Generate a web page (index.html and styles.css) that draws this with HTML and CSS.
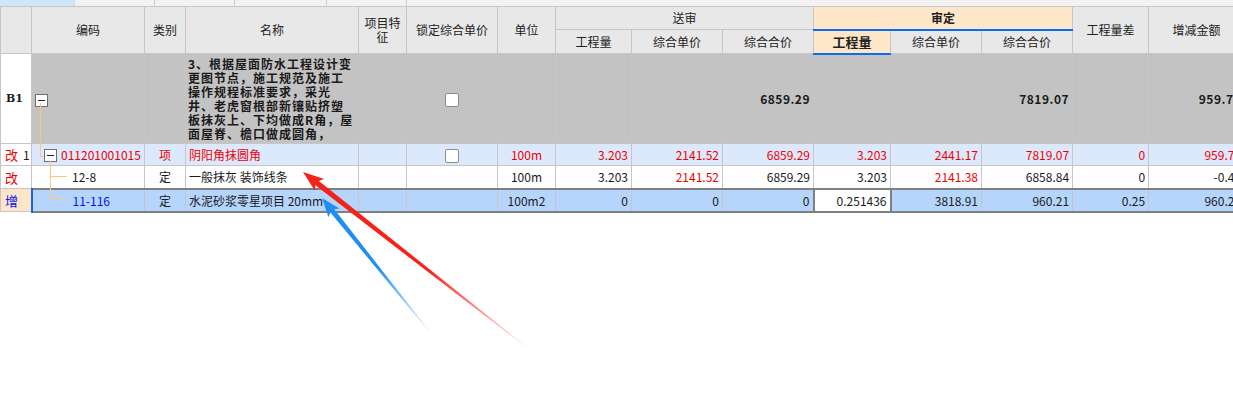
FILE: index.html
```html
<!DOCTYPE html>
<html>
<head>
<meta charset="utf-8">
<link rel="stylesheet" href="styles.css">
</head>
<body>
<div class="page">
  <div class="tabs">
    <div class="tab active"></div>
    <div class="tab w80"></div>
    <div class="tab w80"></div>
    <div class="tab w92"></div>
    <div class="tab w80"></div>
    <div class="tab rest"></div>
  </div>

  <table class="grid">
    <colgroup>
      <col style="width:31px"><col style="width:113px"><col style="width:41px"><col style="width:173px">
      <col style="width:48px"><col style="width:91px"><col style="width:58px"><col style="width:76px">
      <col style="width:91px"><col style="width:91px"><col style="width:77px"><col style="width:91px">
      <col style="width:91px"><col style="width:76px"><col style="width:96px">
    </colgroup>
    <thead>
      <tr class="h1">
        <th rowspan="2"></th>
        <th rowspan="2">编码</th>
        <th rowspan="2">类别</th>
        <th rowspan="2">名称</th>
        <th rowspan="2" class="two">项目特<br>征</th>
        <th rowspan="2">锁定综合单价</th>
        <th rowspan="2">单位</th>
        <th colspan="3">送审</th>
        <th colspan="3" class="audit">审定</th>
        <th rowspan="2">工程量差</th>
        <th rowspan="2">增减金额</th>
      </tr>
      <tr class="h2">
        <th>工程量</th>
        <th>综合单价</th>
        <th>综合合价</th>
        <th class="audit cur">工程量</th>
        <th>综合单价</th>
        <th>综合合价</th>
      </tr>
    </thead>
    <tbody>
      <tr class="part">
        <td class="mark bold">B1</td>
        <td class="code"><span class="fold fold-b1"></span></td>
        <td></td>
        <td class="desc">3、根据屋面防水工程设计变<br>更图节点，施工规范及施工<br>操作规程标准要求，采光<br>井、老虎窗根部新镶贴挤塑<br>板抹灰上、下均做成R角，屋<br>面屋脊、檐口做成圆角，</td>
        <td></td>
        <td class="mid"><span class="check"></span></td>
        <td></td>
        <td></td>
        <td></td>
        <td class="num">6859.29</td>
        <td></td>
        <td></td>
        <td class="num">7819.07</td>
        <td></td>
        <td class="num">959.78</td>
      </tr>
      <tr class="item red">
        <td class="mark"><span class="tag">改</span><span class="idx">1</span></td>
        <td class="code"><span class="fold fold-item"></span>011201001015</td>
        <td class="mid">项</td>
        <td>阴阳角抹圆角</td>
        <td></td>
        <td class="mid"><span class="check"></span></td>
        <td class="mid">100m</td>
        <td class="num">3.203</td>
        <td class="num">2141.52</td>
        <td class="num">6859.29</td>
        <td class="num">3.203</td>
        <td class="num">2441.17</td>
        <td class="num">7819.07</td>
        <td class="num">0</td>
        <td class="num">959.78</td>
      </tr>
      <tr class="sub">
        <td class="mark"><span class="tag">改</span></td>
        <td class="code leaf">12-8</td>
        <td class="mid">定</td>
        <td>一般抹灰 装饰线条</td>
        <td></td>
        <td></td>
        <td class="mid">100m</td>
        <td class="num">3.203</td>
        <td class="num hot">2141.52</td>
        <td class="num">6859.29</td>
        <td class="num">3.203</td>
        <td class="num hot">2141.38</td>
        <td class="num">6858.84</td>
        <td class="num">0</td>
        <td class="num">-0.45</td>
      </tr>
      <tr class="sub picked">
        <td class="mark added">增</td>
        <td class="code leaf blue">11-116</td>
        <td class="mid">定</td>
        <td>水泥砂浆零星项目 20mm</td>
        <td></td>
        <td></td>
        <td class="mid">100m2</td>
        <td class="num">0</td>
        <td class="num">0</td>
        <td class="num">0</td>
        <td class="num edit">0.251436</td>
        <td class="num">3818.91</td>
        <td class="num">960.21</td>
        <td class="num">0.25</td>
        <td class="num">960.21</td>
      </tr>
    </tbody>
  </table>

  <svg class="overlay" width="1233" height="407" viewBox="0 0 1233 407">
    <defs>
      <linearGradient id="fadeRed" gradientUnits="userSpaceOnUse" x1="0" y1="0" x2="288" y2="0">
        <stop offset="0" stop-color="#f5221a"/>
        <stop offset="0.55" stop-color="#f5221a"/>
        <stop offset="1" stop-color="#f5221a" stop-opacity="0"/>
      </linearGradient>
      <linearGradient id="fadeBlue" gradientUnits="userSpaceOnUse" x1="0" y1="0" x2="176" y2="0">
        <stop offset="0" stop-color="#1e8ff0"/>
        <stop offset="0.5" stop-color="#1e8ff0"/>
        <stop offset="1" stop-color="#1e8ff0" stop-opacity="0"/>
      </linearGradient>
    </defs>
    <g class="tree">
      <path d="M40.5 103 V156.5 H44"/>
      <path d="M50.5 161 V199.5 H67 M50.5 176.5 H67"/>
    </g>
    <polygon transform="translate(303 172) rotate(38.1)" fill="url(#fadeRed)"
      points="0,0 21,-7.5 18,-2.8 288,-0.4 288,0.4 18,2.8 21,7.5"/>
    <polygon transform="translate(322 198) rotate(51.2)" fill="url(#fadeBlue)"
      points="0,0 19,-7 16.5,-2.5 176,-0.4 176,0.4 16.5,2.5 19,7"/>
  </svg>
</div>
</body>
</html>
```

FILE: styles.css
```css
* {
  margin: 0px;
  padding: 0px;
  box-sizing: border-box;
}
body {
  background: #ffffff;
  font-family: "Noto Sans CJK SC", "DejaVu Sans", sans-serif;
  font-size: 12px;
  color: #1a1a1a;
}
.page {
  width: 1233px;
  height: 407px;
  position: relative;
  overflow: hidden;
}
.tabs {
  display: flex;
  height: 6px;
  background: #f2f2f2;
}
.tab {
  width: 80px;
  border-right: 1px solid #cfcfcf;
}
.tab.active {
  width: 75px;
  background: #cde6fa;
  border-right: 1px solid #c4dcef;
}
.tab.w92 {
  width: 92px;
}
.tab.rest {
  flex: 1;
  border-right: none;
}

.grid {
  width: 1244px;
  table-layout: fixed;
  border-collapse: collapse;
}
.grid th,
.grid td {
  border: 1px solid #c6c6c6;
  overflow: hidden;
  white-space: nowrap;
}
.grid th {
  background: #e8e8e8;
  font-weight: normal;
  color: #222;
  text-align: center;
  line-height: 14px;
}
.h1 th {
  height: 23px;
}
.h2 th {
  height: 24px;
}
.grid th.two {
  white-space: normal;
}
.grid th.audit {
  background: #fee7c9;
  font-weight: bold;
  border-bottom: 2px solid #0a6cf0;
}
.grid th.cur {
  font-size: 13px;
}

.grid td {
  padding: 0 3px;
  height: 23px;
  text-align: left;
}
.grid td.num {
  text-align: right;
}
.grid td.mid {
  text-align: center;
}
.mark {
  background: #ffffff;
  padding-left: 4px !important;
}
.tag {
  color: #f00000;
  font-size: 13px;
}
.idx {
  margin-left: 5px;
}

.part td {
  background: #c3c3c3;
  height: 90px;
  font-weight: bold;
}
.part td.mark {
  background: #ffffff;
  text-align: center;
  padding-left: 0 !important;
  font-family: "DejaVu Serif", serif;
  font-size: 11px;
}
.part td.desc {
  white-space: nowrap;
  letter-spacing: 1px;
  line-height: 14px;
  padding: 1px 2px;
}
.part td.num {
  font-size: 12px;
  letter-spacing: 0.5px;
}

.item td {
  background: #dce9fc;
  height: 22px;
  color: #f00000;
}
.item td.mark {
  background: #ffffff;
  color: #1a1a1a;
}
.sub td {
  background: #ffffff;
}
.hot {
  color: #f00000;
}

.code {
  padding-left: 3px !important;
}
.item .code {
  padding-left: 12px !important;
}
.code.leaf {
  padding-left: 40px !important;
}
.code.blue {
  color: #0010f0;
}

.fold {
  display: inline-block;
  width: 13px;
  height: 13px;
  border: 1px solid #6e6e6e;
  background: #ffffff;
  position: relative;
  vertical-align: middle;
}
.fold::after {
  content: "";
  position: absolute;
  left: 2px;
  right: 2px;
  top: 5px;
  height: 1px;
  background: #222;
}
.fold-item {
  margin-right: 4px;
  margin-top: -2px;
}

.check {
  display: inline-block;
  width: 14px;
  height: 14px;
  border: 1px solid #8c8c8c;
  border-radius: 2px;
  background: #ffffff;
  vertical-align: middle;
}

.picked td {
  background: #b5d5fc;
  border-top: 2px solid #7f7f7f;
  border-bottom: 2px solid #7f7f7f;
}
.picked td.mark.added {
  background: #fee5c8;
  color: #0010f0;
  font-size: 13px;
  border-top: 1px solid #c6c6c6;
  border-bottom: 1px solid #c6c6c6;
  border-right: 2px solid #1466e6;
}
.picked td.edit {
  background: #ffffff;
  border-left: 2px solid #7f7f7f;
  border-right: 2px solid #7f7f7f;
}

.overlay {
  position: absolute;
  top: 0;
  left: 0;
  pointer-events: none;
}
.tree path {
  fill: none;
  stroke: #ffc47a;
  stroke-width: 1;
}
```
